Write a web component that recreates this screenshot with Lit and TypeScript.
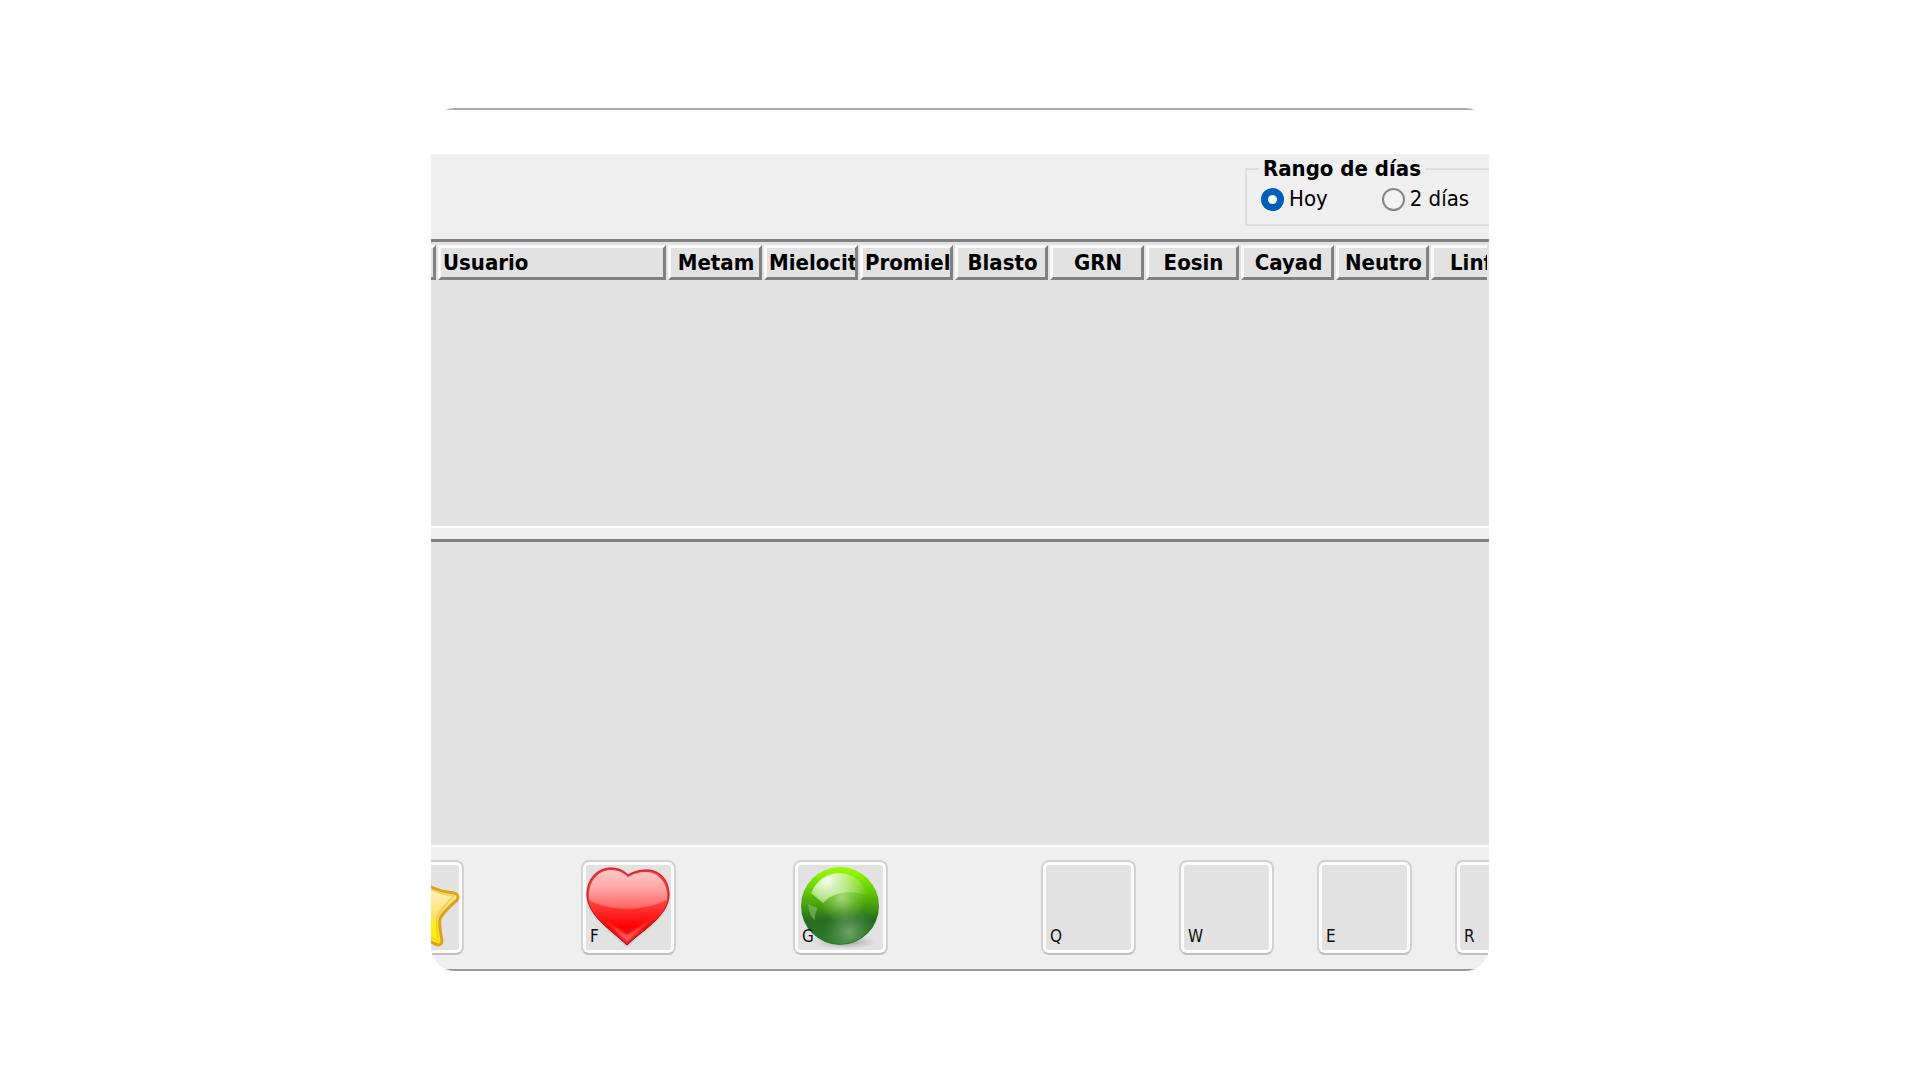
import { LitElement, html, css, svg, nothing } from "lit";
import { customElement, state } from "lit/decorators.js";

const COLUMNS = [
  { name: "Usuario", size: "wide" },
  { name: "Metam", size: "large" },
  { name: "Mielocit", size: "large" },
  { name: "Promiel", size: "small" },
  { name: "Blasto", size: "small" },
  { name: "GRN", size: "large" },
  { name: "Eosin", size: "small" },
  { name: "Cayad", size: "small" },
  { name: "Neutro", size: "small" },
  { name: "Linf", size: "last" },
];

const star = svg`
  <defs>
    <linearGradient id="sf" gradientUnits="userSpaceOnUse" x1="0" y1="6" x2="0" y2="85">
      <stop offset="0" stop-color="#fdf5c8"/><stop offset=".35" stop-color="#fdf0b4"/><stop offset=".66" stop-color="#fbe060"/>
      <stop offset=".72" stop-color="#faf020"/><stop offset="1" stop-color="#fdf000"/>
    </linearGradient>
  </defs>
  <path d="M47 6 Q50 6 52 12 Q56 23 62 27 Q70 31 85 33 Q91 35 88 40 Q73 53 71 59 Q70 66 73 80 Q73 87 66 84 L47 74 L28 84 Q22 86 22 81 L24 59 L7 39 Q4 35 10 33 L32 28 Z"
    fill="url(#sf)" stroke="#dda21a" stroke-width="3" stroke-linejoin="round"/>
  <path d="M60 28 Q70 34 85 36 Q71 49 68 58 Q67 67 69 81 L47 70" fill="none" stroke="#f0c43c" stroke-width="2" opacity=".7"/>`;

const heart = svg`
  <defs>
    <linearGradient id="hf" gradientUnits="userSpaceOnUse" x1="0" y1="8" x2="0" y2="86">
      <stop offset="0" stop-color="#f42c2c"/><stop offset=".45" stop-color="#ff4040"/>
      <stop offset=".75" stop-color="#fe0000"/><stop offset="1" stop-color="#f02020"/>
    </linearGradient>
    <linearGradient id="hg" gradientUnits="userSpaceOnUse" x1="0" y1="9" x2="0" y2="49">
      <stop offset="0" stop-color="#ffcccc"/><stop offset=".5" stop-color="#ffa4a4"/><stop offset="1" stop-color="#ff6060"/>
    </linearGradient>
    <linearGradient id="he" x1="0" y1="0" x2="0" y2="1">
      <stop offset="0" stop-color="#dc1a1a"/><stop offset="1" stop-color="#951010"/>
    </linearGradient>
    <filter id="hb" x="-10%" y="-10%" width="120%" height="120%"><feGaussianBlur stdDeviation="1"/></filter>
  </defs>
  <path d="M47 15 C41 9 35 8 29 8 C14 9 6 21 6 36 C7 56 29 69 46 86 C60 71 87 57 88 36 C88 19 78 10 66 10 C58 10 52 12 47 15 Z" fill="#666" opacity=".6" filter="url(#hb)"/>
  <path d="M47 15 C41 9 35 8 29 8 C14 9 6 21 6 35 C7 56 29 69 46 85 C60 71 87 57 88 35 C88 19 78 10 66 10 C58 10 52 12 47 15 Z" fill="url(#hf)" stroke="url(#he)" stroke-width="1"/>
  <path d="M24 60 Q35 69 46 75 Q58 68 72 58 Q58 71 46 82 Q37 73 24 60Z" fill="#ff6868" opacity=".8" filter="url(#hb)"/>
  <path d="M47 17 C41 11 35 10 29 10 C16 11 8 22 8 35 C8 37 8 39 9 41 Q27 49 48 49 Q69 48 86 40 C88 23 77 12 66 12 C58 12 52 14 47 17 Z" fill="url(#hg)"/>`;

const ball = svg`
  <defs>
    <linearGradient id="bf" x1="0" y1="0" x2="0" y2="1">
      <stop offset="0" stop-color="#9cff00"/><stop offset=".25" stop-color="#6fd406"/>
      <stop offset=".5" stop-color="#469c10"/><stop offset=".68" stop-color="#266d22"/><stop offset="1" stop-color="#2c7a28"/>
    </linearGradient>
    <radialGradient id="bl" gradientUnits="userSpaceOnUse" cx="56" cy="72" r="26">
      <stop offset="0" stop-color="#7fb07c" stop-opacity=".8"/><stop offset="1" stop-color="#5d9a58" stop-opacity="0"/>
    </radialGradient>
    <radialGradient id="bh" gradientUnits="userSpaceOnUse" cx="35" cy="22" r="42">
      <stop offset="0" stop-color="#fff" stop-opacity=".95"/><stop offset=".35" stop-color="#ecfbd8" stop-opacity=".7"/><stop offset="1" stop-color="#c7f596" stop-opacity="0"/>
    </radialGradient>
    <radialGradient id="bc" gradientUnits="userSpaceOnUse" cx="49" cy="38" r="24">
      <stop offset="0" stop-color="#d9f2c2" stop-opacity=".6"/><stop offset="1" stop-color="#a4d77b" stop-opacity="0"/>
    </radialGradient>
    <radialGradient id="bs"><stop offset="0" stop-color="#777" stop-opacity=".7"/><stop offset="1" stop-color="#999" stop-opacity="0"/></radialGradient>
  </defs>
  <ellipse cx="52" cy="82" rx="32" ry="7" fill="url(#bs)"/>
  <circle cx="47" cy="46" r="39" fill="url(#bf)"/>
  <circle cx="47" cy="46" r="38" fill="url(#bl)"/>
  <path d="M18 33 Q27 13 47 13 Q68 14 77 38 Q64 30 49 33 Q37 35 30 43 Z" fill="url(#bh)"/>
  <circle cx="49" cy="38" r="24" fill="url(#bc)"/>
  <path d="M15 44 L25 48 Q21 54 22 61 Q16 55 15 44Z" fill="#8cc578" opacity=".55"/>`;

@customElement("cell-key")
class CellKey extends LitElement {
  static properties = { letter: {}, art: { attribute: false } };
  declare letter: string;
  declare art: unknown;
  static styles = css`
    :host { display: block; flex: none; }
    .key {
      position: relative;
      display: flex;
      align-items: flex-end;
      box-sizing: border-box;
      width: 95px;
      height: 95px;
      padding: 0 0 7px 4px;
      border: 2px solid #d2d2d2;
      border-bottom-color: #c0c0c0;
      border-radius: 8px;
      background: #e2e2e2;
      box-shadow: inset 0 0 0 3px #fcfcfc;
      font: 17px/20px "DejaVu Sans Condensed", "DejaVu Sans", sans-serif;
      color: #111;
    }
    .art { position: absolute; left: -2px; top: -2px; width: 94px; height: 94px; }
    .letter { position: relative; padding-left: 3px; }
  `;
  render() {
    return html`<button class="key" type="button" aria-label=${this.letter ? nothing : "★"}>
      ${this.art ? html`<svg class="art" viewBox="0 0 94 94" aria-hidden="true">${this.art}</svg>` : nothing}
      ${this.letter ? html`<span class="letter">${this.letter}</span>` : nothing}
    </button>`;
  }
}

@customElement("app-root")
class AppRoot extends LitElement {
  @state() private range = "Hoy";

  static styles = css`
    :host {
      display: block;
      padding: 108px 0;
      font: 22px/28px "DejaVu Sans Condensed", "DejaVu Sans", sans-serif;
      color: #000;
    }
    .window {
      max-width: 1058px;
      margin: 0 auto;
      overflow: hidden;
      border-radius: 24px;
      background: #efefef;
    }
    .strip { height: 44px; border-top: 2px solid #acaaaa; background: #fff; }
    .toolbar { display: flex; justify-content: flex-end; padding: 1px 0 13px; }
    .range {
      display: flex;
      box-sizing: border-box;
      width: 244px;
      margin: 0;
      padding: 2px 0 11px 14px;
      border: 2px solid #dedede;
      border-right: 0;
    }
    .legend { margin-left: -2px; padding: 0 4px; font-weight: bold; }
    .choices { display: flex; gap: 54px; white-space: nowrap; }
    .choice { display: flex; align-items: center; gap: 5px; }
    .radio {
      appearance: none;
      box-sizing: border-box;
      width: 23px;
      height: 23px;
      margin: 0;
      border: 2px solid #868686;
      border-radius: 50%;
      background: #f3f3f3;
    }
    .radio:checked { border: 7px solid #005fb8; background: #fff; }
    .pane {
      overflow: hidden;
      border-top: 3px solid #808080;
      border-bottom: 2px solid #fcfcfc;
      background: #e2e2e2;
    }
    .upper { min-height: 284px; }
    .lower { min-height: 303px; margin-top: 11px; }
    .grid {
      table-layout: fixed;
      width: 1064px;
      margin-left: -6px;
      border-spacing: 2px 3px;
    }
    .edge { width: 9px; }
    .wide { width: 228px; }
    .large { width: 94px; }
    .small { width: 93px; }
    .head {
      box-sizing: border-box;
      height: 35px;
      padding: 0 0 0 2px;
      overflow: hidden;
      border: 3px solid;
      border-color: #fafafa #808080 #808080 #fafafa;
      font-weight: bold;
      white-space: nowrap;
      text-align: center;
    }
    .head.wide { text-align: left; }
    .head.last { padding-left: 16px; border-right: 0; text-align: left; }
    .keys { display: flex; gap: 153px; padding: 13px 0 14px; border-bottom: 2px solid #999797; }
    .figures { display: flex; gap: 117px; margin-left: -62px; }
    .letters { display: flex; gap: 43px; }
  `;

  private choice(label: string) {
    return html`<label class="choice">
      <input class="radio" type="radio" name="range" .checked=${this.range === label}
        @change=${() => (this.range = label)} />${label}
    </label>`;
  }

  render() {
    return html`
      <main class="window">
        <div class="strip"></div>
        <div class="toolbar">
          <fieldset class="range">
            <legend class="legend">Rango de días</legend>
            <div class="choices">${this.choice("Hoy")}${this.choice("2 días")}</div>
          </fieldset>
        </div>
        <section class="pane upper">
          <table class="grid">
            <thead><tr>
              <td class="head edge"></td>
              ${COLUMNS.map((c) => html`<th class="head ${c.size}" scope="col">${c.name}</th>`)}
            </tr></thead>
          </table>
        </section>
        <section class="pane lower"></section>
        <footer class="keys">
          <div class="figures">
            <cell-key .art=${star}></cell-key>
            <cell-key letter="F" .art=${heart}></cell-key>
            <cell-key letter="G" .art=${ball}></cell-key>
          </div>
          <div class="letters">
            ${["Q", "W", "E", "R"].map((k) => html`<cell-key letter=${k}></cell-key>`)}
          </div>
        </footer>
      </main>
    `;
  }
}
